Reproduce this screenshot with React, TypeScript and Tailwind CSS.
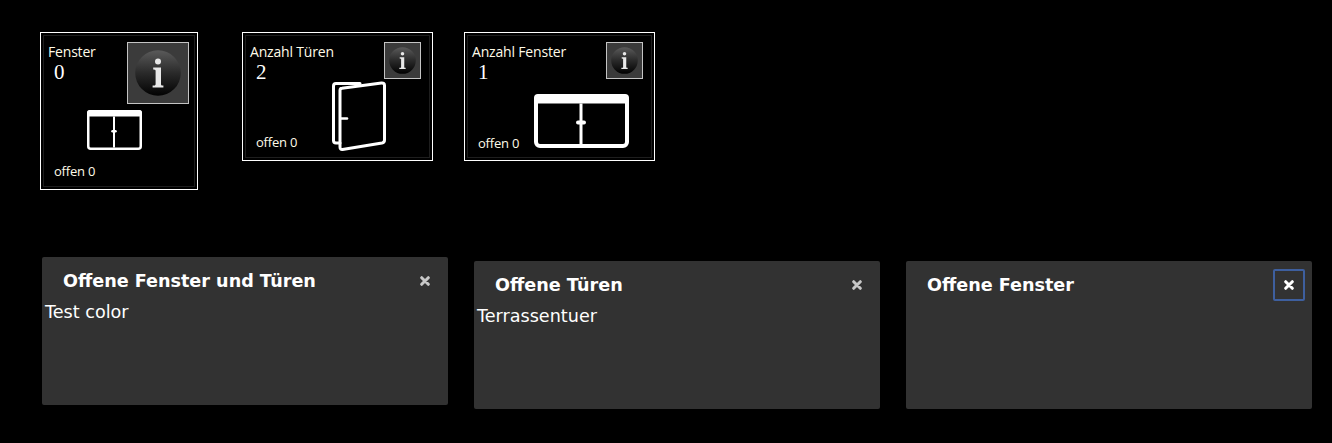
import React from "react";

function InfoButton({ size, id }: { size: number; id: string }) {
  return (
    <div
      className="shrink-0 flex items-center justify-center border border-[#c4c4c4] bg-[#3b3b3b]"
      style={{ width: size, height: size }}
    >
      <svg viewBox="0 0 100 100" width={size - 2} height={size - 2}>
        <defs>
          <linearGradient id={id} x1="0" y1="0" x2="0" y2="1">
            <stop offset="0" stopColor="#5a5a5a" />
            <stop offset="0.5" stopColor="#2a2a2a" />
            <stop offset="1" stopColor="#020202" />
          </linearGradient>
        </defs>
        <circle cx="50" cy="50" r="38" fill={`url(#${id})`} />
        <circle cx="50" cy="31" r="5" fill="#e8e8e8" />
        <path
          d="M42 41H55V69Q55 71 59 71V74H41V71Q46 71 46 69V46Q46 44 42 44Z"
          fill="#e8e8e8"
        />
      </svg>
    </div>
  );
}

function WindowIcon({
  w,
  h,
  s,
  bar,
  handle,
  handleH,
  mullion,
}: {
  w: number;
  h: number;
  s: number;
  bar: number;
  handle: number;
  handleH: number;
  mullion: number;
}) {
  const mid = Math.round(w / 2 - 0.5);
  return (
    <svg width={w} height={h} viewBox={`0 0 ${w} ${h}`} fill="none" stroke="#fff" className="block">
      <rect x={s / 2} y={s / 2} width={w - s} height={h - s} rx={s} strokeWidth={s} />
      <rect x={0} y={0} width={w} height={bar} rx={s} fill="#fff" stroke="none" />
      <path d={`M${mid} ${bar}V${h - s}`} strokeWidth={mullion} />
      <path d={`M${mid - handle} ${h * 0.53}H${mid + handle}`} strokeWidth={handleH} strokeLinecap="round" />
    </svg>
  );
}

function DoorIcon() {
  return (
    <svg width="54" height="71" viewBox="0 0 54 71" fill="none" stroke="#fff" strokeLinejoin="round" strokeLinecap="round" className="block">
      <path d="M28 2.5H4Q1.5 2.5 1.5 5V59.5Q1.5 62 4 62H8" strokeWidth="3" />
      <path d="M8 9.5Q8 7.5 10 7.3L49.5 2Q52.5 1.8 52.5 4.5V59Q52.5 61.5 50 62L10.5 68.5Q8 68.8 8 66Z" strokeWidth="3" />
      <path d="M9 37.5H15" strokeWidth="2.5" />
    </svg>
  );
}

function Card({
  title,
  count,
  info,
  id,
  className,
  icon,
  iconClass,
  bodyClass,
  footClass,
  headerClass,
}: {
  title: string;
  count: string;
  info: number;
  id: string;
  className: string;
  icon: React.ReactNode;
  iconClass: string;
  bodyClass: string;
  footClass: string;
  headerClass: string;
}) {
  return (
    <div className={`shrink-0 border border-white p-[2px] ${className}`}>
      <div className="h-full border border-[#1e1e1e] flex flex-col">
        <div className={`flex items-start justify-between ${headerClass}`}>
          <div>
            <div className="text-[14px] leading-[19px] text-[#fffbe8] font-['Open_Sans','Noto_Sans',sans-serif] tracking-[-0.18px]">
              {title}
            </div>
            <div className="pl-[6px] text-[21px] leading-[22px] text-white font-['Liberation_Serif',serif]">
              {count}
            </div>
          </div>
          <InfoButton size={info} id={id} />
        </div>
        <div className={`flex ${bodyClass}`}>
          <div className={footClass}>
            <span className="text-[13px] leading-[16px] text-[#fffbe8] font-['Open_Sans','Noto_Sans',sans-serif] tracking-[-0.2px] block">
              offen 0
            </span>
          </div>
          <div className={iconClass}>{icon}</div>
        </div>
      </div>
    </div>
  );
}

function CloseIcon({ color }: { color: string }) {
  return (
    <svg width="10" height="10" viewBox="0 0 10 10" className="block">
      <path d="M1.7 1.7L8.3 8.3M8.3 1.7L1.7 8.3" stroke={color} strokeWidth="3" strokeLinecap="round" />
    </svg>
  );
}

function Panel({
  title,
  body,
  focused,
  className,
}: {
  title: string;
  body?: string;
  focused?: boolean;
  className: string;
}) {
  return (
    <div className={`w-[406px] h-[148px] shrink-0 rounded-[2px] bg-[#323232] text-white font-['DejaVu_Sans',sans-serif] ${className}`}>
      <div className="flex items-center justify-between pl-[21px] pr-[7px] pt-[8px]">
        <h2 className="text-[17.6px] font-bold leading-[32px] text-white">{title}</h2>
        <div
          className={`w-[32px] h-[32px] flex items-center justify-center rounded-[2px] border-2 ${
            focused ? "border-[#3e5f9e]" : "border-transparent"
          }`}
        >
          <CloseIcon color={focused ? "#ffffff" : "#c8c8c8"} />
        </div>
      </div>
      <div className="pl-[3px] pt-[5px] text-[17.6px] leading-[20px]">{body}</div>
    </div>
  );
}

export default function App() {
  return (
    <div className="w-[1332px] h-[443px] bg-black overflow-hidden pt-[32px]">
      <div className="flex items-start pl-[40px]">
        <Card
          title="Fenster"
          count="0"
          info={62}
          id="g1"
          className="w-[158px] h-[158px]"
          headerClass="pl-[4px] pr-[5px] pt-[6px]"
          bodyClass="flex-col flex-1"
          iconClass="order-first pl-[43px] pt-[6px]"
          footClass="pl-[10px] pt-[13px]"
          icon={<WindowIcon w={55} h={40} s={2.5} bar={6.5} handle={1.5} handleH={2.5} mullion={2} />}
        />
        <Card
          title="Anzahl Türen"
          count="2"
          info={37}
          id="g2"
          className="w-[191px] h-[129px] ml-[44px]"
          headerClass="pl-[4px] pr-[8px] pt-[6px]"
          bodyClass="items-end justify-between -mt-[2px]"
          iconClass="pr-[43px]"
          footClass="pl-[10px] pb-[2px]"
          icon={<DoorIcon />}
        />
        <Card
          title="Anzahl Fenster"
          count="1"
          info={37}
          id="g3"
          className="w-[191px] h-[129px] ml-[31px]"
          headerClass="pl-[4px] pr-[8px] pt-[6px]"
          bodyClass="items-end justify-between pt-[11px]"
          iconClass="pr-[22px]"
          footClass="pl-[10px] -mb-[3px]"
          icon={<WindowIcon w={95} h={54} s={4} bar={9.5} handle={3} handleH={4} mullion={3} />}
        />
      </div>
      <div className="flex items-start pl-[42px] pt-[67px]">
        <Panel title="Offene Fenster und Türen" body="Test color" className="" />
        <Panel title="Offene Türen" body="Terrassentuer" className="ml-[26px] mt-[4px]" />
        <Panel title="Offene Fenster" focused className="ml-[26px] mt-[4px]" />
      </div>
    </div>
  );
}
